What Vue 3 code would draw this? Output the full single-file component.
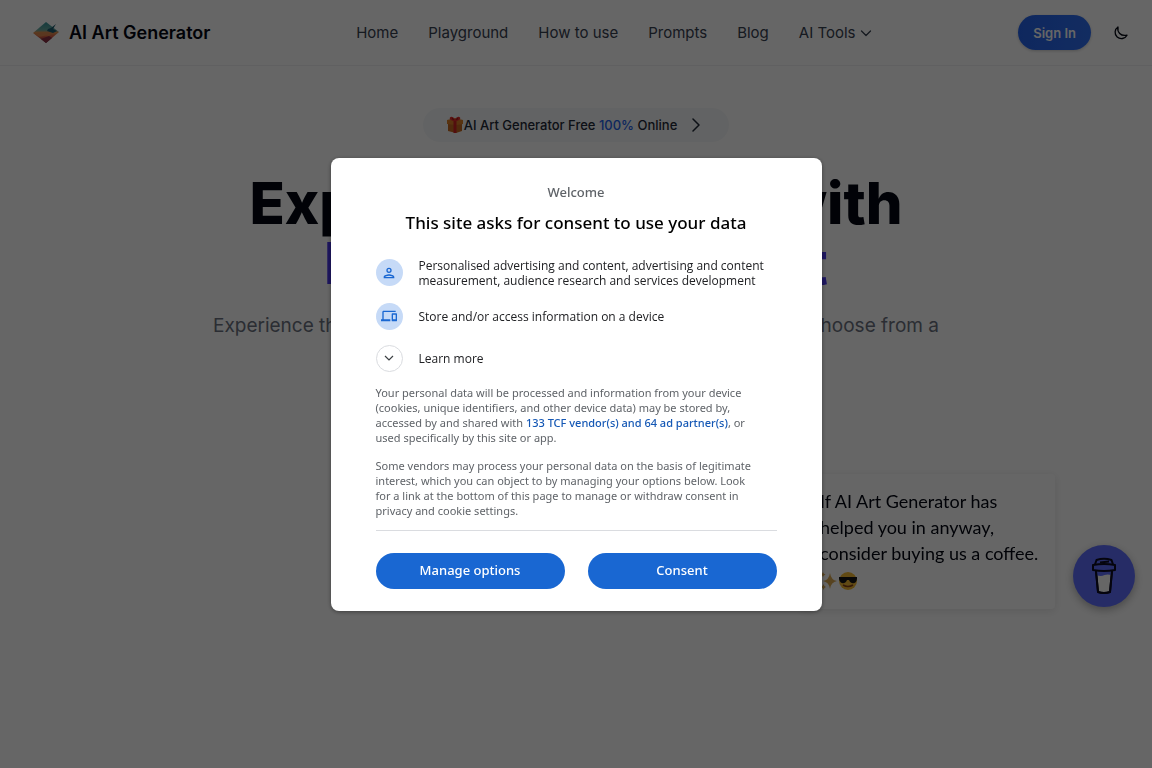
<script setup>
const links = ['Home', 'Playground', 'How to use', 'Prompts', 'Blog']
</script>

<template>
  <div class="page">
    <header class="bar">
      <a class="brand" href="#">
        <svg width="28" height="24" viewBox="0 0 28 24" aria-hidden="true">
          <defs>
            <linearGradient id="sky" x1="0" y1="0" x2="0" y2="1">
              <stop offset="0" stop-color="#35959b" />
              <stop offset=".38" stop-color="#69aaa0" />
              <stop offset=".5" stop-color="#e39350" />
              <stop offset=".7" stop-color="#d95e43" />
              <stop offset="1" stop-color="#542b45" />
            </linearGradient>
          </defs>
          <path d="M1 12 14 1 27 11 14 22Z" fill="url(#sky)" />
          <path d="M3 13c5-3 8 0 12-2s5-1 8 0l-6 4c-4-2-8 2-11 0Z" fill="#e08a50" />
          <path d="M16 8l3-1 5-4-3 5 4 2-4 2-6-2Z" fill="#1d5c70" />
          <path d="M9 18l8-3 3 2-6 5Z" fill="#8d3045" />
        </svg>
        <span>AI Art Generator</span>
      </a>
      <nav class="nav" aria-label="Main">
        <a v-for="link in links" :key="link" href="#">{{ link }}</a>
        <button class="tools" type="button">
          AI Tools
          <svg width="12" height="12" viewBox="0 0 12 12" fill="none" stroke="currentColor" stroke-width="1.3" stroke-linecap="round" stroke-linejoin="round" aria-hidden="true"><path d="M1.5 4 6 8.500 10.500 4" /></svg>
        </button>
      </nav>
      <div class="actions">
        <button class="sign" type="button">Sign In</button>
        <button class="theme" type="button" aria-label="Dark mode">
          <svg width="16" height="16" viewBox="0 0 16 16" fill="none" stroke="currentColor" stroke-width="1.3" stroke-linecap="round" stroke-linejoin="round" aria-hidden="true"><path d="M5 2C4 7 7.500 11.500 14 10.200A6.300 6.300 0 1 1 5 2Z" /></svg>
        </button>
      </div>
    </header>

    <main class="hero">
      <a class="pill" href="#">
        <svg width="18" height="18" viewBox="0 0 18 18" aria-hidden="true">
          <path d="M2 6h14v9l-6 2-8-2Z" fill="#c66a22" />
          <path d="M1 4l8-2 8 2v4l-7 1-9-1Z" fill="#dc802a" />
          <path d="M7.500 3h3v14h-3Z" fill="#cf2525" />
          <path d="M9 5C5 5 3 3 4 1.500S8 1 9 4c1-3 4-4 5-2.500S13 5 9 5Z" fill="#e12c2c" />
          <path d="M6 2.500l1.500 1M12 2.500l-1.500 1" stroke="#7d1518" />
        </svg>
        <span>AI Art Generator Free <b>100%</b> Online</span>
        <svg class="next" width="10" height="14" viewBox="0 0 10 14" fill="none" stroke="currentColor" stroke-width="1.5" stroke-linecap="round" stroke-linejoin="round" aria-hidden="true"><path d="M2 1l6 6-6 6" /></svg>
      </a>
      <h1>Explore Creativity with<br><span>Perchance AI Edit</span></h1>
      <p>Experience the magic of turning your words into amazing images. Choose from a<br>wide range of styles and create your own art.</p>
    </main>

    <aside class="coffee">
      <p>
        If AI Art Generator has<br>helped you in anyway,<br>consider buying us a coffee.<br>
        <svg width="38" height="20" viewBox="0 0 38 20" aria-label="sparkles and sunglasses smile">
          <path d="M10 2q1 7 7 8-6 1-7 8-1-7-7-8 6-1 7-8ZM3 1q.5 2 2.500 2.500Q3.500 4 3 6 2.500 4 .5 3.500 2.500 3 3 1ZM3.500 13q.5 2.500 2.500 3-2 .5-2.500 3-.5-2.500-2.500-3 2-.5 2.500-3Z" fill="#d9a850" />
          <circle cx="28" cy="10" r="9" fill="#f3b832" />
          <path d="M19 6h18v2c-.5 5-6 6-8 1h-2c-2 5-7 4-8-1Z" fill="#151515" />
          <path d="M23 14q5 3 10 0" fill="none" stroke="#874216" stroke-width="1.5" />
        </svg>
      </p>
      <button type="button" aria-label="Buy us a coffee">
        <svg width="26" height="38" viewBox="0 0 26 38" fill="none" stroke="#0d0c22" stroke-width="2" stroke-linejoin="round" aria-hidden="true">
          <path d="M5 14l2 21q6 2 12 0l2-21Z" fill="#fff" />
          <path d="M5 14h16l-.4 4q-4-1-7 0-4 2-8 0Z" fill="#5f6fff" stroke="none" />
          <path d="M5 14l2 21q6 2 12 0l2-21" />
          <path d="M2 8q11-2 22 0v5q-11 2-22 0Z" fill="#5f6fff" />
          <path d="M4 7.500 5.500 3q7.500-2.500 15 0L22 7.500M9 5.500l9-1" />
        </svg>
      </button>
    </aside>

    <div class="overlay">
      <section class="dialog" role="dialog" aria-modal="true" aria-labelledby="consent-title">
        <p class="welcome">Welcome</p>
        <h2 id="consent-title">This site asks for consent to use your data</h2>
        <ul>
          <li>
            <span class="dot">
              <svg width="16" height="16" viewBox="0 0 24 24" fill="currentColor" aria-hidden="true"><path d="M12 6a2 2 0 1 1 0 4 2 2 0 0 1 0-4m0 10c2.700 0 5.800 1.290 6 2H6c.230-.720 3.310-2 6-2m0-12a4 4 0 1 0 0 8 4 4 0 0 0 0-8m0 10c-2.670 0-8 1.340-8 4v2h16v-2c0-2.660-5.330-4-8-4" /></svg>
            </span>
            <span>Personalised advertising and content, advertising and content measurement, audience research and services development</span>
          </li>
          <li>
            <span class="dot">
              <svg width="16" height="16" viewBox="0 0 24 24" fill="currentColor" aria-hidden="true"><path d="M4 6h18V4H4c-1.100 0-2 .9-2 2v11H0v3h14v-3H4V6zm19 2h-6c-.550 0-1 .450-1 1v10c0 .550.450 1 1 1h6c.550 0 1-.450 1-1V9c0-.550-.450-1-1-1zm-1 9h-4v-7h4v7z" /></svg>
            </span>
            <span>Store and/or access information on a device</span>
          </li>
          <li>
            <button class="more" type="button">
              <span class="dot ring">
                <svg width="10" height="10" viewBox="0 0 10 10" fill="none" stroke="currentColor" stroke-width="1.2" aria-hidden="true"><path d="M1 3l4 4 4-4" /></svg>
              </span>
              <span>Learn more</span>
            </button>
          </li>
        </ul>
        <p class="text">Your personal data will be processed and information from your device<br>(cookies, unique identifiers, and other device data) may be stored by,<br>accessed by and shared with <a href="#">133 TCF vendor(s) and 64 ad partner(s)</a>, or<br>used specifically by this site or app.</p>
        <p class="text">Some vendors may process your personal data on the basis of legitimate<br>interest, which you can object to by managing your options below. Look<br>for a link at the bottom of this page to manage or withdraw consent in<br>privacy and cookie settings.</p>
        <div class="choices">
          <button type="button">Manage options</button>
          <button type="button">Consent</button>
        </div>
      </section>
    </div>
  </div>
</template>

<style>
body {
  background: #fff;
}
</style>

<style scoped>
* {
  box-sizing: border-box;
}
.page {
  min-height: 100vh;
  font-family: Inter, "Liberation Sans", sans-serif;
  color: #030712;
}
h1, h2, p, ul {
  margin: 0;
  padding: 0;
}
a {
  color: inherit;
  text-decoration: none;
}
button {
  border: 0;
  padding: 0;
  background: none;
  font: inherit;
  color: inherit;
}
svg {
  flex: none;
}
.bar {
  height: 66px;
  padding: 0 23px 0 32px;
  display: flex;
  align-items: center;
  justify-content: space-between;
  border-bottom: 1px solid #f1f1f3;
}
.brand {
  display: flex;
  align-items: center;
  gap: 9px;
  font-size: 18px;
  font-weight: 600;
}
.nav {
  display: flex;
  gap: 30px;
  font-size: 15px;
  color: #374151;
}
.tools {
  display: flex;
  align-items: center;
  gap: 5px;
}
.actions {
  display: flex;
  align-items: center;
  gap: 22px;
}
.sign {
  height: 35px;
  padding: 0 15px;
  border-radius: 18px;
  background: linear-gradient(90deg, #2563eb, #2f6ff2);
  box-shadow: 0 1px 3px rgba(0, 0, 0, 0.2);
  color: #fff;
  font-size: 13px;
  font-weight: 600;
}
.theme {
  display: flex;
}
.hero {
  padding-top: 42px;
  display: flex;
  flex-direction: column;
  align-items: center;
  text-align: center;
}
.pill {
  height: 34px;
  padding: 0 28px 0 23px;
  display: flex;
  align-items: center;
  border-radius: 17px;
  background: #f6f8f9;
  font-size: 13px;
  font-weight: 500;
  color: #1f2937;
}
.pill b {
  font-weight: 500;
  color: #2563eb;
}
.next {
  margin-left: 14px;
}
h1 {
  margin-top: 31px;
  font-size: 58px;
  line-height: 60px;
  font-weight: 800;
}
h1 span {
  color: #4b38f0;
}
.hero p {
  margin-top: 17px;
  font-size: 19px;
  line-height: 31px;
  color: #6b7280;
}
.coffee {
  position: fixed;
  right: 17px;
  bottom: 159px;
  display: flex;
  align-items: flex-end;
  gap: 18px;
}
.coffee p {
  width: 255px;
  padding: 14px 12px 17px 20px;
  border-radius: 4px;
  box-shadow: 0 2px 8px rgba(0, 0, 0, 0.1);
  background: #fff;
  font-family: Lato, sans-serif;
  font-size: 18px;
  line-height: 26px;
}
.coffee p svg {
  vertical-align: middle;
}
.coffee button {
  width: 62px;
  height: 62px;
  margin-bottom: 2px;
  display: grid;
  place-items: center;
  border-radius: 50%;
  background: #5f6fff;
  box-shadow: 0 3px 8px rgba(0, 0, 0, 0.3);
}
.overlay {
  position: fixed;
  inset: 0;
  display: grid;
  place-items: center;
  background: rgba(0, 0, 0, 0.6);
}
.dialog {
  width: 491px;
  max-width: 100%;
  padding: 23px 45px 22px;
  border-radius: 8px;
  background: #fff;
  box-shadow: 0 1px 4px rgba(0, 0, 0, 0.4);
  font-family: "Noto Sans", "Open Sans", sans-serif;
  font-size: 11px;
  line-height: 15px;
}
.welcome {
  font-size: 13px;
  line-height: 22px;
  font-weight: 500;
  text-align: center;
  color: #5f6368;
}
h2 {
  margin: 8px 0 23px;
  font-size: 17px;
  line-height: 24px;
  font-weight: 500;
  text-align: center;
  color: #000;
}
ul {
  list-style: none;
  display: grid;
  gap: 15px;
  font-family: "Open Sans", "Noto Sans", sans-serif;
  font-size: 12px;
  font-weight: 500;
  color: #202124;
}
li, .more {
  display: flex;
  align-items: center;
  gap: 16px;
}
.dot {
  flex: none;
  width: 27px;
  height: 27px;
  display: grid;
  place-items: center;
  border-radius: 50%;
  background: #c6daf7;
  color: #1967d2;
}
.ring {
  border: 1px solid #dadce0;
  background: #fff;
  color: #3c4043;
}
.text {
  margin-top: 13px;
  color: #5f6368;
}
.text a {
  font-weight: 500;
  color: #1558b5;
}
.choices {
  margin-top: 12px;
  padding-top: 22px;
  display: grid;
  grid-template-columns: 1fr 1fr;
  gap: 23px;
  border-top: 1px solid #dadce0;
}
.choices button {
  height: 36px;
  border-radius: 18px;
  background: #1967d2;
  color: #fff;
  font-size: 13px;
  font-weight: 500;
}
</style>
